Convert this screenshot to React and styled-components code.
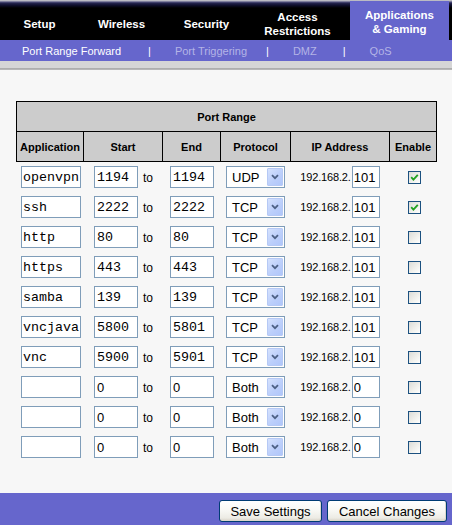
import React from "react";
import styled, { createGlobalStyle } from "styled-components";

const GlobalStyle = createGlobalStyle`
  html, body { margin: 0; padding: 0; background: #f7f7f7; }
  body { font-family: "Liberation Sans", Arial, sans-serif; }
  * { box-sizing: border-box; }
`;

const Page = styled.div`
  display: flex;
  flex-direction: column;
  min-height: 100vh;
  width: 452px;
`;

const TopNav = styled.div`
  display: flex;
  height: 40px;
  background: linear-gradient(to bottom, #d2d2d2 0px, #a4a4b4 1px, #5a5a86 2px, #262650 3px, #101030 5px, #000 8px);
`;

const Tab = styled.div`
  display: flex;
  align-items: center;
  justify-content: center;
  width: ${(p) => p.$w}px;
  margin-left: ${(p) => p.$ml || 0}px;
  margin-top: ${(p) => (p.$active ? 1 : 0)}px;
  padding-top: ${(p) => (p.$active ? 2 : 8)}px;
  background: ${(p) => (p.$active ? "#6666cc" : "transparent")};
  color: #fff;
  font-weight: bold;
  font-size: 11.5px;
  line-height: 14px;
  text-align: center;
`;

const SubNav = styled.div`
  display: flex;
  align-items: center;
  height: 21px;
  background: #6666cc;
  padding-left: 22px;
  font-size: 11px;
`;

const SubItem = styled.span`
  margin-left: ${(p) => p.$ml || 0}px;
  color: ${(p) => (p.$active ? "#ffffff" : "#b4b4e6")};
  white-space: nowrap;
`;

const Sep = styled.span`
  margin-left: ${(p) => p.$ml}px;
  color: #fff;
`;

const Band = styled.div`
  height: 9px;
  background: linear-gradient(to bottom, #d6d6d6 0px, #d6d6d6 7px, #a9a9a9 7px, #bdbdbd 9px);
`;

const Content = styled.div`
  flex: 1;
  padding: 31px 0 0 16px;
`;

const HeaderBox = styled.div`
  width: 421px;
  border: 1px solid #000;
  background: #cccccc;
  font-size: 11px;
  font-weight: bold;
  color: #000;
`;

const TitleRow = styled.div`
  height: 30px;
  border-bottom: 1px solid #000;
  display: flex;
  align-items: center;
  justify-content: center;
`;

const Columns = styled.div`
  display: grid;
  grid-template-columns: 66px 79px 58px 70px 99px 47px;
`;

const ColumnRow = styled(Columns)`
  height: 29px;
`;

const HeadCell = styled.div`
  display: flex;
  align-items: center;
  justify-content: center;
  border-left: ${(p) => (p.$first ? "none" : "1px solid #000")};
`;

const BodyRow = styled(Columns)`
  height: 30px;
  padding: 0 1px;
  width: 421px;
`;

const Cell = styled.div`
  display: flex;
  align-items: center;
  justify-content: center;
  padding-left: ${(p) => p.$pl || 0}px;
`;

const TextField = styled.input`
  width: ${(p) => p.$w}px;
  height: 22px;
  border: 1px solid #7f9db9;
  background: #fff;
  padding: 0 ${(p) => p.$pad || 1}px;
  margin: 0;
  outline: none;
  color: #000;
  font-family: ${(p) =>
    p.$mono ? '"Liberation Mono", "Courier New", monospace' : '"Liberation Sans", Arial, sans-serif'};
  font-size: ${(p) => p.$size || 13.33}px;
`;

const ToLabel = styled.span`
  font-size: 12px;
  margin-left: 5px;
  padding-top: 2px;
  color: #000;
`;

const IpPrefix = styled.span`
  font-size: 11px;
  letter-spacing: -0.15px;
  margin-right: 1px;
  color: #000;
`;

const SelectBox = styled.div`
  width: 59px;
  height: 22px;
  border: 1px solid #7f9db9;
  background: #fff;
  display: flex;
  align-items: center;
  justify-content: space-between;
  padding: 1px;
`;

const SelectText = styled.span`
  font-size: 13px;
  padding-left: 4px;
  color: #000;
`;

const SelectArrow = styled.span`
  width: 16px;
  height: 18px;
  border: 1px solid #b6c9f5;
  border-radius: 1px;
  background: linear-gradient(135deg, #d6e2fd 0%, #bccffb 55%, #b0c6fa 100%);
  display: flex;
  align-items: center;
  justify-content: center;
`;

const CheckBox = styled.span`
  width: 13px;
  height: 13px;
  margin-left: 3px;
  border: 1px solid #1c5180;
  background: linear-gradient(135deg, #dcdcd7 0%, #f0f0ec 55%, #ffffff 100%);
  display: flex;
  align-items: center;
  justify-content: center;
`;

const Footer = styled.div`
  height: 32px;
  background: #6666cc;
  display: flex;
  justify-content: flex-end;
  align-items: flex-start;
  gap: 5px;
  padding: 7px 5px 0 0;
`;

const Button = styled.button`
  width: ${(p) => p.$w}px;
  height: 22px;
  margin: 0;
  padding: 0;
  border: 1px solid #003c74;
  border-radius: 3px;
  background: linear-gradient(to bottom, #ffffff 0%, #f7f7f3 50%, #ecebe4 85%, #d6d0c5 100%);
  box-shadow: inset -1px -1px 0 #dcd8cc;
  font-family: "Liberation Sans", Arial, sans-serif;
  font-size: 13px;
  color: #000;
`;

const rows = [
  { app: "openvpn", start: "1194", end: "1194", proto: "UDP", ip: "101", on: true },
  { app: "ssh", start: "2222", end: "2222", proto: "TCP", ip: "101", on: true },
  { app: "http", start: "80", end: "80", proto: "TCP", ip: "101" },
  { app: "https", start: "443", end: "443", proto: "TCP", ip: "101" },
  { app: "samba", start: "139", end: "139", proto: "TCP", ip: "101" },
  { app: "vncjava", start: "5800", end: "5801", proto: "TCP", ip: "101" },
  { app: "vnc", start: "5900", end: "5901", proto: "TCP", ip: "101" },
  { app: "", start: "0", end: "0", proto: "Both", ip: "0", blank: true },
  { app: "", start: "0", end: "0", proto: "Both", ip: "0", blank: true },
  { app: "", start: "0", end: "0", proto: "Both", ip: "0", blank: true },
];

const Chevron = () => (
  <svg width="8" height="6" viewBox="0 0 8 6">
    <path d="M1 1.2 L4 4.2 L7 1.2" fill="none" stroke="#4d6185" strokeWidth="1.8" />
  </svg>
);

const Tick = () => (
  <svg width="9" height="9" viewBox="0 0 9 9">
    <path d="M1.2 4.2 L3.4 6.6 L7.8 1.8" fill="none" stroke="#21a121" strokeWidth="1.8" />
  </svg>
);

export default function App() {
  return (
    <Page>
      <GlobalStyle />
      <TopNav>
        <Tab $w={79}>Setup</Tab>
        <Tab $w={85}>Wireless</Tab>
        <Tab $w={85}>Security</Tab>
        <Tab $w={97}>
          Access
          <br />
          Restrictions
        </Tab>
        <Tab $w={99} $ml={4} $active>
          Applications
          <br />
          &amp; Gaming
        </Tab>
      </TopNav>
      <SubNav>
        <SubItem $active>Port Range Forward</SubItem>
        <Sep $ml={27}>|</Sep>
        <SubItem $ml={24}>Port Triggering</SubItem>
        <Sep $ml={19}>|</Sep>
        <SubItem $ml={24}>DMZ</SubItem>
        <Sep $ml={26}>|</Sep>
        <SubItem $ml={24}>QoS</SubItem>
      </SubNav>
      <Band />
      <Content>
        <HeaderBox>
          <TitleRow>Port Range</TitleRow>
          <ColumnRow>
            <HeadCell $first>Application</HeadCell>
            <HeadCell>Start</HeadCell>
            <HeadCell>End</HeadCell>
            <HeadCell>Protocol</HeadCell>
            <HeadCell>IP Address</HeadCell>
            <HeadCell>Enable</HeadCell>
          </ColumnRow>
        </HeaderBox>
        {rows.map((r, i) => (
          <BodyRow key={i}>
            <Cell $pl={2}>
              <TextField $w={60} $mono defaultValue={r.app} />
            </Cell>
            <Cell $pl={2}>
              <TextField
                $w={44}
                $pad={2}
                $mono={!r.blank}
                $size={r.blank ? 13 : 13.33}
                defaultValue={r.start}
              />
              <ToLabel>to</ToLabel>
            </Cell>
            <Cell $pl={2}>
              <TextField
                $w={44}
                $pad={2}
                $mono={!r.blank}
                $size={r.blank ? 13 : 13.33}
                defaultValue={r.end}
              />
            </Cell>
            <Cell $pl={1}>
              <SelectBox>
                <SelectText>{r.proto}</SelectText>
                <SelectArrow>
                  <Chevron />
                </SelectArrow>
              </SelectBox>
            </Cell>
            <Cell $pl={1}>
              <IpPrefix>192.168.2.</IpPrefix>
              <TextField $w={28} $size={13} defaultValue={r.ip} />
            </Cell>
            <Cell>
              <CheckBox>{r.on && <Tick />}</CheckBox>
            </Cell>
          </BodyRow>
        ))}
      </Content>
      <Footer>
        <Button $w={103}>Save Settings</Button>
        <Button $w={120}>Cancel Changes</Button>
      </Footer>
    </Page>
  );
}
